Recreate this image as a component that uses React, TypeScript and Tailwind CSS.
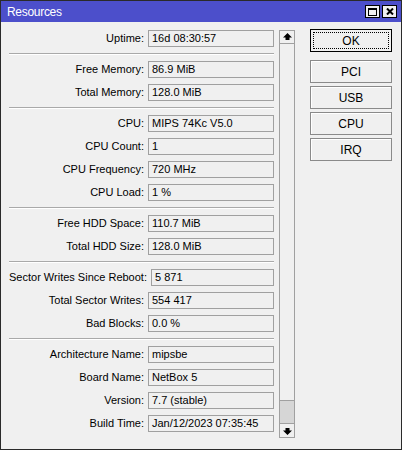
const groups: [string, string][][] = [
  [["Uptime", "16d 08:30:57"]],
  [
    ["Free Memory", "86.9 MiB"],
    ["Total Memory", "128.0 MiB"],
  ],
  [
    ["CPU", "MIPS 74Kc V5.0"],
    ["CPU Count", "1"],
    ["CPU Frequency", "720 MHz"],
    ["CPU Load", "1 %"],
  ],
  [
    ["Free HDD Space", "110.7 MiB"],
    ["Total HDD Size", "128.0 MiB"],
  ],
  [
    ["Sector Writes Since Reboot", "5 871"],
    ["Total Sector Writes", "554 417"],
    ["Bad Blocks", "0.0 %"],
  ],
  [
    ["Architecture Name", "mipsbe"],
    ["Board Name", "NetBox 5"],
    ["Version", "7.7 (stable)"],
    ["Build Time", "Jan/12/2023 07:35:45"],
  ],
];

function Row({ label, value }: { label: string; value: string }) {
  return (
    <div className="flex items-center h-[17px]">
      <span className="flex-1 text-right pr-[4px] text-[11px] text-black whitespace-nowrap">{label}:</span>
      <div className="w-[126px] h-[17px] border border-[#a0a0a0] bg-[#f0f0f0] px-[3px] flex items-center text-[11px] text-black whitespace-nowrap">
        {value}
      </div>
    </div>
  );
}

function Arrow({ down }: { down?: boolean }) {
  return (
    <svg width="9" height="8" viewBox="0 0 9 8" className={down ? "rotate-180" : ""}>
      <path d="M4.5 0 L9 4.5 L6.5 4.5 L6.5 7 L2.5 7 L2.5 4.5 L0 4.5 Z" fill="#000" />
    </svg>
  );
}

export default function App() {
  return (
    <div
      className="w-[402px] h-[450px] border border-[#2a2a2a] bg-[#f0f0f0] flex flex-col overflow-hidden select-none"
      style={{ fontFamily: '"Liberation Sans", Arial, sans-serif' }}
    >
      {/* title bar */}
      <div className="h-[21px] bg-[#4c4fcb] flex items-center pl-[6px] pr-[4px]">
        <span className="text-white text-[12px] tracking-[-0.3px] flex-1 leading-none">Resources</span>
        <div className="flex gap-[2px]">
          <div className="w-[15px] h-[13px] bg-[#f0f0f0] border border-black flex items-center justify-center">
            <div className="w-[9px] h-[8px] border border-black border-t-2" />
          </div>
          <div className="w-[15px] h-[13px] bg-[#f0f0f0] border border-black flex items-center justify-center">
            <svg width="8" height="7" viewBox="0 0 8 7">
              <path d="M1 0.5 L7 6.5 M7 0.5 L1 6.5" stroke="#000" strokeWidth="2" />
            </svg>
          </div>
        </div>
      </div>

      <div className="flex flex-1">
        {/* fields */}
        <div className="w-[273px] pl-[8px] pt-[8px] flex flex-col">
          {groups.map((g, i) => (
            <div key={i} className="flex flex-col">
              {i > 0 && <div className="h-[2px] border-t border-[#a9a9a9] border-b border-b-white my-[6px]" />}
              <div className="flex flex-col gap-[6px]">
                {g.map(([l, v]) => (
                  <Row key={l} label={l} value={v} />
                ))}
              </div>
            </div>
          ))}
        </div>

        {/* scrollbar */}
        <div className="ml-[5px] mt-[8px] w-[16px] h-[408px] flex flex-col">
          <div className="h-[14px] border border-[#a0a0a0] bg-[#f0f0f0] flex items-center justify-center">
            <Arrow />
          </div>
          <div className="flex-1 border-x border-[#a0a0a0] flex flex-col justify-end">
            <div className="h-[23px] bg-[#d6d6d6] border-t border-[#a0a0a0]" />
          </div>
          <div className="h-[15px] border border-[#a0a0a0] bg-[#f0f0f0] flex items-center justify-center">
            <Arrow down />
          </div>
        </div>

        {/* buttons */}
        <div className="ml-[15px] pt-[7px] w-[82px] flex flex-col">
          <button className="h-[23px] border border-black bg-[#f0f0f0] p-[2px] text-[12px] text-black">
            <div className="h-full border border-dotted border-black flex items-center justify-center">OK</div>
          </button>
          <div className="mt-[8px] flex flex-col gap-[3px]">
            {["PCI", "USB", "CPU", "IRQ"].map((b) => (
              <button
                key={b}
                className="h-[23px] border border-[#8a8a8a] bg-[#f0f0f0] shadow-[inset_1px_1px_0_#ffffff] text-[12px] text-black flex items-center justify-center"
              >
                {b}
              </button>
            ))}
          </div>
        </div>
      </div>
    </div>
  );
}
